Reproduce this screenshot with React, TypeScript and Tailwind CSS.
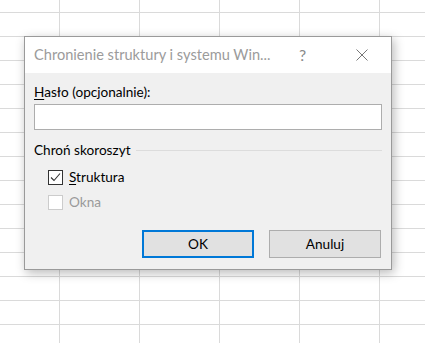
import React from 'react';

const COLS = [60, 80, 80, 80, 80, 80];
const ROWS = 15;

function SheetGrid() {
  return (
    <div className="flex flex-col">
      {Array.from({ length: ROWS }).map((_, r) => (
        <div
          key={r}
          className={`flex border-b border-[#dadada] ${r === 0 ? 'h-[13px]' : 'h-[24px]'}`}
        >
          {COLS.map((w, c) => (
            <div
              key={c}
              className="shrink-0 h-full border-r border-[#dadada]"
              style={{ width: w }}
            />
          ))}
        </div>
      ))}
    </div>
  );
}

function Checkbox({ checked, disabled }: { checked?: boolean; disabled?: boolean }) {
  return (
    <div
      className={`w-[15px] h-[15px] shrink-0 bg-white border flex items-center justify-center ${
        disabled ? 'border-[#cccccc]' : 'border-[#333333]'
      }`}
    >
      {checked && (
        <svg width="13" height="13" viewBox="0 0 13 13" fill="none">
          <path d="M2 6.5 L5 9.5 L11 2.5" stroke="#333" strokeWidth="1.1" />
        </svg>
      )}
    </div>
  );
}

export default function App() {
  return (
    <div className="relative w-[425px] h-[343px] overflow-hidden bg-white font-['Lato',sans-serif]">
      <SheetGrid />

      <div className="absolute left-[24px] top-[36px] w-[368px] h-[234px] border border-[#9a9a9a] bg-[#f0f0f0] shadow-[2px_3px_10px_rgba(0,0,0,0.28)] flex flex-col">
        <div className="h-[36px] bg-white flex items-center shrink-0">
          <span className="pl-[9px] text-[14.6px] text-[#9b9b9b] whitespace-nowrap min-w-0">
            Chronienie struktury i systemu Win...
          </span>
          <div className="flex-1" />
          <div className="w-[59px] shrink-0 h-full flex items-center justify-center text-[16px] text-[#8a8a8a]">
            ?
          </div>
          <div className="w-[59px] shrink-0 h-full flex items-center justify-center">
            <svg width="12" height="12" viewBox="0 0 12 12" fill="none">
              <path d="M0.5 0.5 L11.5 11.5 M11.5 0.5 L0.5 11.5" stroke="#777" strokeWidth="1" />
            </svg>
          </div>
        </div>

        <div className="flex flex-col px-[9px] text-[13.6px] text-[#000]">
          <div className="h-[20px] mt-[9px] flex items-center">
            <span>
              <span className="underline underline-offset-2">H</span>asło (opcjonalnie):
            </span>
          </div>
          <div className="h-[26px] mt-[2px] bg-white border border-[#adadad]" />

          <div className="h-[20px] mt-[10px] flex items-center">
            <span className="whitespace-nowrap">Chroń skoroszyt</span>
            <div className="flex-1 h-px bg-[#dcdcdc] ml-[5px]" />
          </div>

          <div className="h-[20px] mt-[7px] pl-[14px] flex items-center gap-[6px]">
            <Checkbox checked />
            <span>
              <span className="underline underline-offset-2">S</span>truktura
            </span>
          </div>
          <div className="h-[20px] mt-[5px] pl-[14px] flex items-center gap-[6px]">
            <Checkbox disabled />
            <span className="text-[#9a9a9a]">Okna</span>
          </div>

          <div className="flex justify-end gap-[15px] mt-[18px] pr-[1px]">
            <button className="w-[112px] h-[28px] bg-[#e1e1e1] border-2 border-[#0078d7] text-[13.6px] text-black">
              OK
            </button>
            <button className="w-[112px] h-[28px] bg-[#e1e1e1] border border-[#adadad] text-[13.6px] text-black">
              Anuluj
            </button>
          </div>
        </div>
      </div>
    </div>
  );
}
